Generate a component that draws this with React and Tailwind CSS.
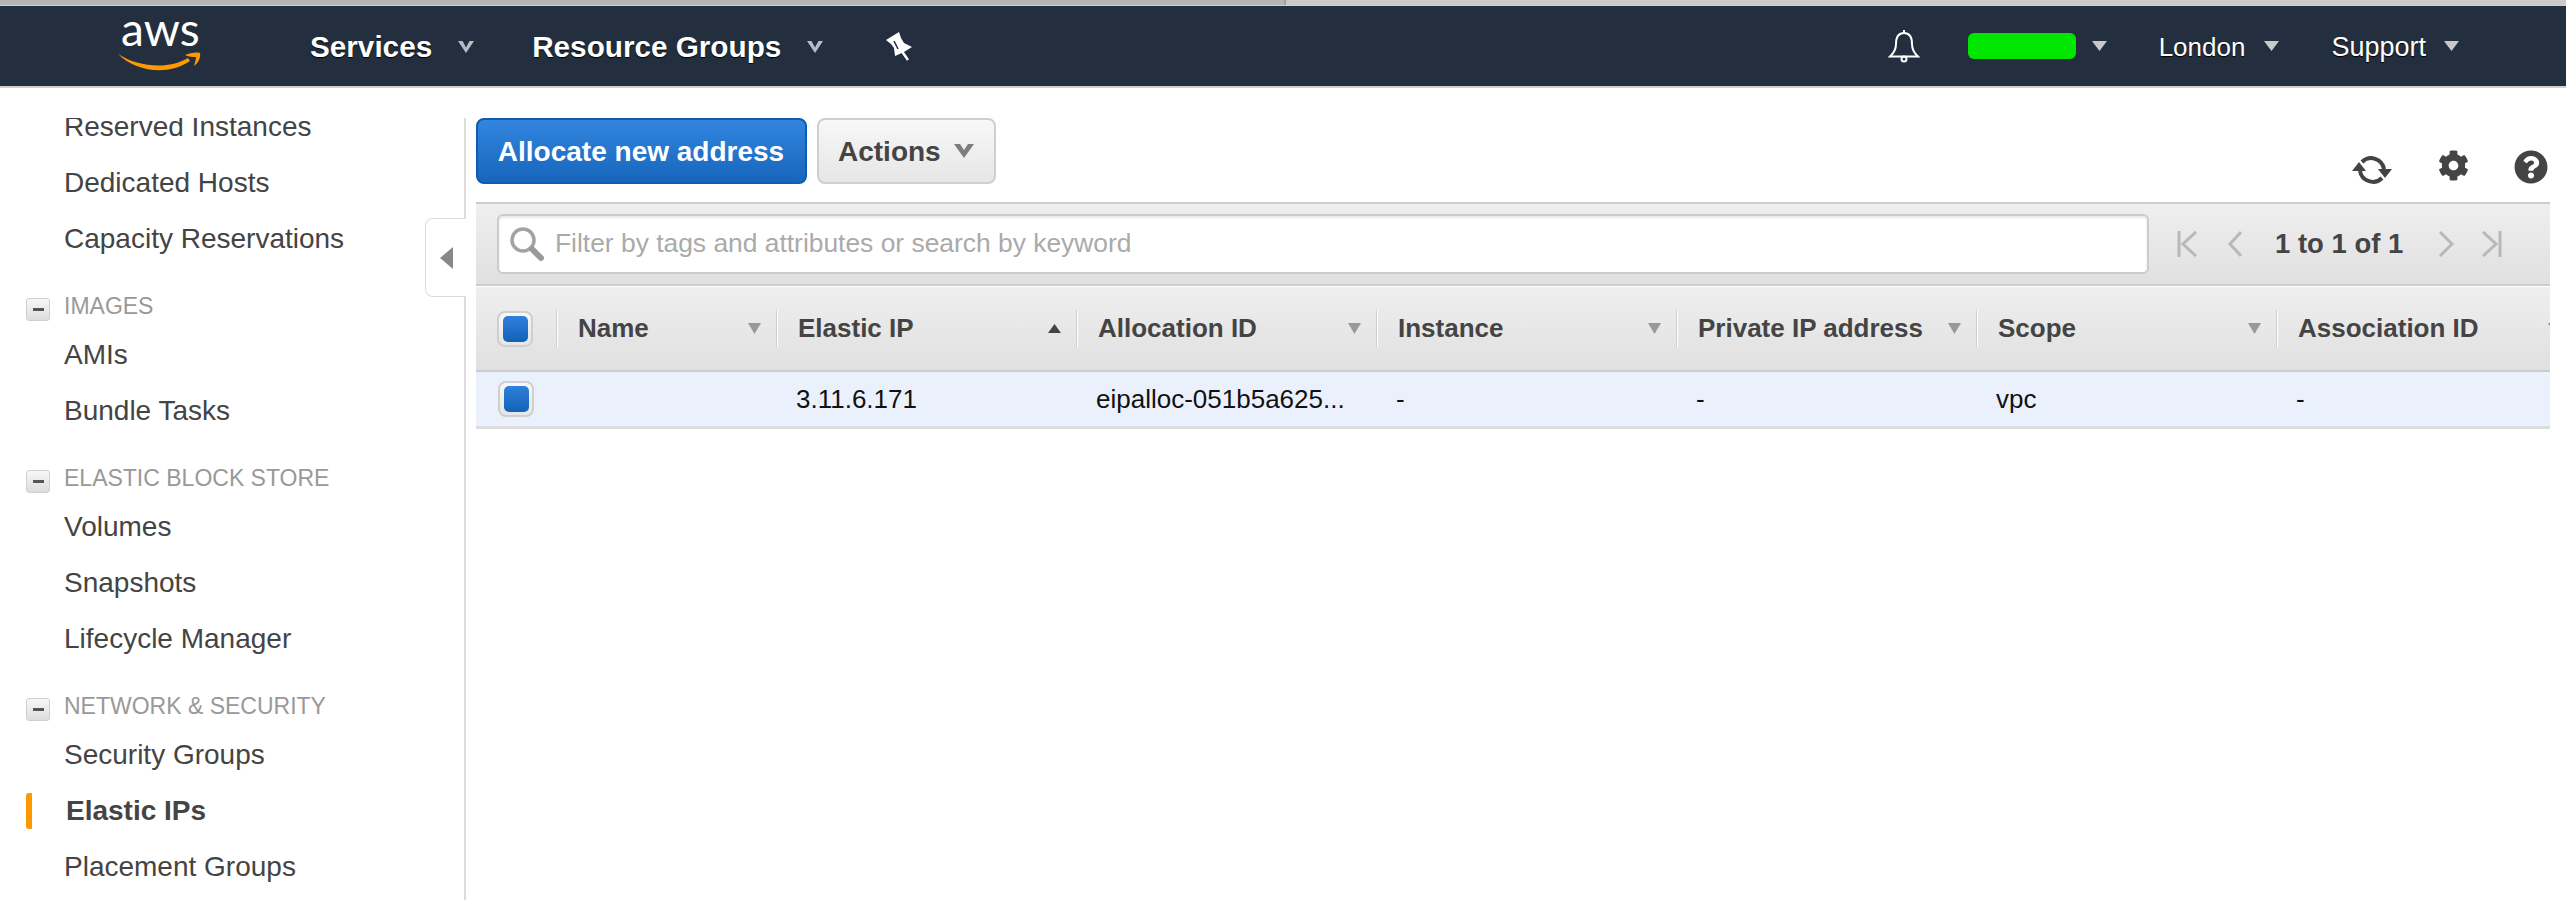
import React from 'react';
import { FaCog, FaQuestionCircle } from 'react-icons/fa';

const navText = "text-white [text-shadow:0_1px_1px_#000]";

const NavChevron = () => (
  <svg width="16" height="12" viewBox="0 0 16 12" className="shrink-0 mt-[2px]">
    <path d="M0 0H4.5L8 6.5L11.5 0H16L8 12Z" fill="#b9bcc0" />
  </svg>
);

const Caret = () => (
  <svg width="15" height="10" viewBox="0 0 15 10" className="shrink-0">
    <path d="M0 0H15L7.5 10Z" fill="#c8c9cb" />
  </svg>
);

const Logo = () => (
  <div className="w-[120px] h-full shrink-0 ml-[100px] pt-[10px] flex flex-col">
    <span className="pl-[21px] h-[26px] leading-[26px] text-[46px] text-white font-['Lato',sans-serif]">aws</span>
    <svg width="120" height="32" viewBox="0 32 120 32">
      <path d="M18 44C38 57 68 60 88 48L90 51C68 66 36 62 18 44Z" fill="#f90" />
      <path d="M85 45C90 43 96 42 100 43C101 48 98 53 94 56C95 52 96 49 96 47C93 47 89 47 85 45Z" fill="#f90" />
    </svg>
  </div>
);

const Pin = () => (
  <svg width="60" height="50" viewBox="0 0 60 50" className="shrink-0 ml-[47px] mt-[-2px]">
    <path d="M16 20L29 12L31 18L34 23L42 27L34 32L25 36L24 28L21 24Z" fill="#fff" />
    <path d="M31 30L38 40" stroke="#fff" strokeWidth="2.500" />
    <path d="M24 21L28 29" stroke="#232f3e" strokeWidth="1.500" />
  </svg>
);

const Bell = () => (
  <svg width="32" height="34" viewBox="0 0 32 34" className="shrink-0" fill="none" stroke="#fff" strokeWidth="2">
    <path d="M16 1V4M16 4C9 4 8 10 8 15C8 21 6 24 2 27.500H30C26 24 24 21 24 15C24 10 23 4 16 4Z" />
    <circle cx="16" cy="30" r="2.500" />
  </svg>
);

const RefreshIcon = () => (
  <svg width="42" height="32" viewBox="0 0 42 32" fill="none">
    <path d="M11 8A13 13 0 0 1 33 15" stroke="#444" strokeWidth="4" />
    <path d="M31 24A13 13 0 0 1 9 17" stroke="#444" strokeWidth="4" />
    <path d="M27 15H41L34 24Z" fill="#444" />
    <path d="M1 17H15L8 8Z" fill="#444" />
  </svg>
);

const SearchIcon = () => (
  <svg width="36" height="36" viewBox="0 0 36 36" fill="none" className="shrink-0">
    <circle cx="14" cy="14" r="11" stroke="#a3a3a3" strokeWidth="3.500" />
    <path d="M23 23L32 32" stroke="#999" strokeWidth="6" strokeLinecap="round" />
  </svg>
);

const PageArrow = ({ d, width, className }) => (
  <svg width={width} height="26" viewBox={`0 0 ${width} 26`} fill="none" className={className}>
    <path d={d} stroke="#b8b8b8" strokeWidth="3" />
  </svg>
);

const Checkbox = () => (
  <div className="w-[36px] h-[36px] rounded-lg border-2 border-[#cfcfcf] bg-gradient-to-b from-[#f7f7f7] to-[#e6e6e6] flex items-center justify-center shrink-0">
    <div className="w-[25px] h-[26px] rounded-[5px] bg-gradient-to-b from-[#2f80dc] to-[#1262b8]" />
  </div>
);

const SortArrow = ({ up }) => (
  <svg width="13" height="11" viewBox="0 0 13 11" className="shrink-0">
    {up ? <path d="M0 10H13L6.500 1Z" fill="#444" /> : <path d="M0 0H13L6.500 11Z" fill="#999" />}
  </svg>
);

const SidebarItem = ({ label, active }) => (
  <div className={`relative h-[56px] flex items-center text-[28px] text-[#444] ${active ? 'font-bold pl-[66px]' : 'pl-[64px]'}`}>
    {active && <div className="absolute left-[26px] top-[10px] w-[6px] h-[36px] rounded-l-[3px] bg-[#ff9900]" />}
    {label}
  </div>
);

const SidebarGroup = ({ label }) => (
  <div className="h-[34px] mt-[22px] mb-[4px] pl-[26px] flex items-center gap-[14px] text-[23px] text-[#999]">
    <div className="w-[24px] h-[23px] mt-[6px] rounded-[3px] border border-[#d0d0d0] bg-gradient-to-b from-[#f8f8f8] to-[#dcdcdc] flex items-center justify-center">
      <div className="w-[11px] h-[3px] bg-[#555]" />
    </div>
    {label}
  </div>
);

const columns = [
  { label: 'Name', value: '', width: 'w-[220px]' },
  { label: 'Elastic IP', value: '3.11.6.171', width: 'w-[300px]', sorted: true },
  { label: 'Allocation ID', value: 'eipalloc-051b5a625...', width: 'w-[300px]' },
  { label: 'Instance', value: '-', width: 'w-[300px]' },
  { label: 'Private IP address', value: '-', width: 'w-[300px]' },
  { label: 'Scope', value: 'vpc', width: 'w-[300px]' },
  { label: 'Association ID', value: '-', width: 'w-[300px]' },
];

export default function App() {
  return (
    <div className="h-[900px] w-[2566px] overflow-hidden bg-white flex flex-col font-['Liberation_Sans',Arial,sans-serif]">
      {/* Browser edge */}
      <div className="h-[6px] flex border-b border-[#d0d0d0]">
        <div className="w-[1286px] bg-[#b5b5b5] border-r-2 border-[#a0a0a0]" />
        <div className="flex-1 bg-[#cacaca]" />
      </div>

      {/* Nav bar */}
      <header className="h-[82px] bg-[#232f3e] border-b-2 border-[#cfcfcf] flex items-center">
        <Logo />
        <span className={`ml-[90px] mt-[2px] text-[29.700px] font-bold ${navText}`}>Services</span>
        <div className="ml-[26px]"><NavChevron /></div>
        <span className={`ml-[58px] mt-[2px] text-[29.700px] font-bold ${navText}`}>Resource Groups</span>
        <div className="ml-[26px]"><NavChevron /></div>
        <Pin />
        <div className="ml-auto pr-[107px] flex items-center">
          <Bell />
          <div className="ml-[48px] w-[108px] h-[26px] rounded-md bg-[#00e600]" />
          <div className="ml-[16px]"><Caret /></div>
          <span className={`ml-[52px] mt-[2px] text-[26px] ${navText}`}>London</span>
          <div className="ml-[19px]"><Caret /></div>
          <span className={`ml-[52px] mt-[2px] text-[27px] ${navText}`}>Support</span>
          <div className="ml-[18px]"><Caret /></div>
        </div>
      </header>

      <div className="flex-1 flex pt-[30px] min-h-0">
        {/* Sidebar */}
        <aside className="relative w-[466px] shrink-0">
          <div className="h-full overflow-hidden border-r-2 border-[#dcdcdc]">
            <div className="mt-[-19px]">
              <SidebarItem label="Reserved Instances" />
              <SidebarItem label="Dedicated Hosts" />
              <SidebarItem label="Capacity Reservations" />
              <SidebarGroup label="IMAGES" />
              <SidebarItem label="AMIs" />
              <SidebarItem label="Bundle Tasks" />
              <SidebarGroup label="ELASTIC BLOCK STORE" />
              <SidebarItem label="Volumes" />
              <SidebarItem label="Snapshots" />
              <SidebarItem label="Lifecycle Manager" />
              <SidebarGroup label="NETWORK & SECURITY" />
              <SidebarItem label="Security Groups" />
              <SidebarItem label="Elastic IPs" active />
              <SidebarItem label="Placement Groups" />
            </div>
          </div>
          <div className="absolute right-0 top-[100px] w-[41px] h-[79px] bg-white border border-r-0 border-[#dcdcdc] rounded-l-lg flex items-center pl-[14px]">
            <svg width="13" height="22" viewBox="0 0 13 22"><path d="M13 0V22L0 11Z" fill="#888" /></svg>
          </div>
        </aside>

        {/* Main */}
        <main className="flex-1 min-w-0 pl-[10px] pr-[16px]">
          <div className="h-[84px] flex items-start justify-between">
            <div className="flex gap-[10px]">
              <button className="w-[331px] h-[66px] pt-[2px] pr-[1px] rounded-lg border-2 border-[#0f5cb0] bg-gradient-to-b from-[#3385dd] to-[#1566bd] text-white text-[28px] font-bold">
                Allocate new address
              </button>
              <button className="w-[179px] h-[66px] pt-[2px] pl-[19px] rounded-lg border-2 border-[#cfcfcf] bg-gradient-to-b from-[#f8f8f8] to-[#e6e6e6] text-[#444] text-[28px] font-bold flex items-center">
                Actions
                <svg width="20" height="14" viewBox="0 0 20 14" className="ml-[13px] mb-[3px]">
                  <path d="M0 0H6L10 6L14 0H20L10 14Z" fill="#7d7d7d" />
                </svg>
              </button>
            </div>
            <div className="flex items-start mt-[32px] text-[#444]">
              <div className="mt-[4px]"><RefreshIcon /></div>
              <FaCog className="ml-[45px] text-[31px]" />
              <FaQuestionCircle className="ml-[45px] mr-[2px] text-[34px]" />
            </div>
          </div>

          {/* Filter bar */}
          <div className="h-[84px] border-y-2 border-[#cccccc] bg-gradient-to-b from-[#efefef] to-[#e0e0e0] flex items-center pl-[21px]">
            <div className="w-[1652px] h-[60px] rounded-md border-2 border-[#cccccc] bg-white flex items-center pl-[10px] gap-[10px] shadow-[inset_0_2px_3px_#e8e8e8]">
              <SearchIcon />
              <span className="text-[26.400px] text-[#aaaaaa]">Filter by tags and attributes or search by keyword</span>
            </div>
            <PageArrow width={21} className="ml-[28px]" d="M2 0V26M19 1L6 13L19 25" />
            <PageArrow width={14} className="ml-[30px]" d="M13 1L2 13L13 25" />
            <span className="ml-[33px] text-[27.500px] font-bold text-[#444]">1 to 1 of 1</span>
            <PageArrow width={15} className="ml-[36px]" d="M1 1L13 13L1 25" />
            <PageArrow width={20} className="ml-[28px]" d="M1 1L14 13L1 25M18 0V26" />
          </div>

          {/* Table */}
          <div className="mt-[1px] overflow-hidden">
            <div className="flex h-[85px] border-b-2 border-[#cccccc] bg-gradient-to-b from-[#efefef] to-[#e0e0e0]">
              <div className="w-[80px] shrink-0 pl-[21px] flex items-center">
                <Checkbox />
              </div>
              {columns.map((col) => (
                <div key={col.label} className={`${col.width} shrink-0 flex items-center`}>
                  <div className="w-full h-[37px] border-l border-[#cfcfcf] shadow-[inset_1px_0_0_#fff] pl-[21px] pr-[15px] flex items-center justify-between text-[26px] font-bold text-[#444]">
                    <span className="whitespace-nowrap">{col.label}</span>
                    <SortArrow up={col.sorted} />
                  </div>
                </div>
              ))}
            </div>
            <div className="flex h-[57px] border-b-[3px] border-[#dddddd] bg-[#eaf1fd]">
              <div className="w-[80px] shrink-0 pl-[22px] flex items-center">
                <Checkbox />
              </div>
              {columns.map((col) => (
                <div key={col.label} className={`${col.width} shrink-0 pl-[20px] pt-[1px] flex items-center text-[26px] text-[#111]`}>
                  {col.value}
                </div>
              ))}
            </div>
          </div>
        </main>
      </div>
    </div>
  );
}
